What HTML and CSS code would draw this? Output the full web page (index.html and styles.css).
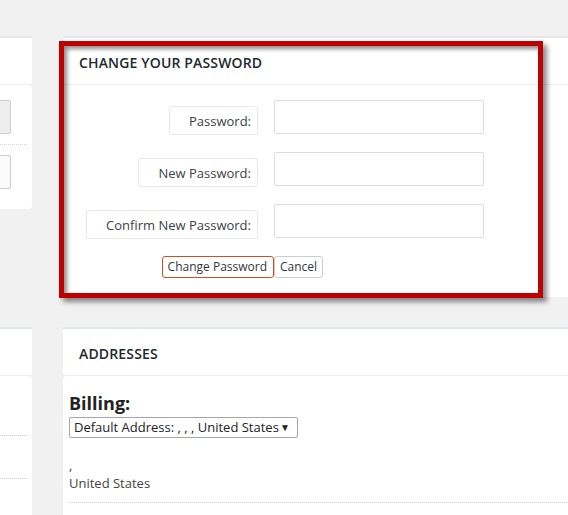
FILE: index.html
```html
<!DOCTYPE html>
<html>
<head>
<meta charset="utf-8">
<link rel="stylesheet" href="styles.css">
</head>
<body>
<div class="page">
  <div class="panel side-panel">
    <div class="panel-head"></div>
    <div class="panel-body side-body-top">
      <div class="side-row"><div class="side-box side-box-gray"></div></div>
      <div class="side-row side-row-last"><div class="side-box side-box-light"></div></div>
    </div>
  </div>

  <div class="panel pw-panel">
    <div class="panel-head"><h2 class="panel-title">CHANGE YOUR PASSWORD</h2></div>
    <div class="panel-body pw-body">
      <div class="pw-row">
        <div class="pw-label-cell"><span class="pw-label">Password:</span></div>
        <div class="pw-input"></div>
      </div>
      <div class="pw-row">
        <div class="pw-label-cell"><span class="pw-label">New Password:</span></div>
        <div class="pw-input"></div>
      </div>
      <div class="pw-row">
        <div class="pw-label-cell"><span class="pw-label">Confirm New Password:</span></div>
        <div class="pw-input"></div>
      </div>
      <div class="pw-actions">
        <div class="pw-action-cell"><button class="btn btn-primary">Change Password</button></div>
        <button class="btn btn-cancel">Cancel</button>
      </div>
    </div>
    <div class="highlight"></div>
  </div>

  <div class="panel side-panel">
    <div class="panel-head"></div>
    <div class="panel-body side-body-bottom">
      <div class="side-line side-line-first"></div>
      <div class="side-line"></div>
    </div>
  </div>

  <div class="panel addr-panel">
    <div class="panel-head"><h2 class="panel-title">ADDRESSES</h2></div>
    <div class="panel-body addr-body">
      <h3 class="addr-title">Billing:</h3>
      <div class="addr-select"><span>Default Address: , , , United States</span><span class="addr-arrow">▼</span></div>
      <div class="addr-text">
        <div>,</div>
        <div>United States</div>
      </div>
    </div>
  </div>
</div>
</body>
</html>
```

FILE: styles.css
```css
html, body {
  margin: 0;
  padding: 0;
  overflow: hidden;
}
body {
  background: #f1f1f1;
  font-family: "Open Sans", "Liberation Sans", sans-serif;
  color: #444;
  width: 568px;
  height: 515px;
}
.page {
  display: grid;
  grid-template-columns: 232px 540px;
  column-gap: 31px;
  row-gap: 30px;
  align-items: start;
  margin-left: -200px;
  padding-top: 36px;
}
.panel {
  border-top: 2px solid #e5e8eb;
  position: relative;
}
.panel-head {
  background: #fff;
  height: 47px;
  box-sizing: border-box;
  padding: 15px 16px 0;
  border-bottom: 1px solid #eeeeee;
}
.panel-title {
  margin: 0;
  font-size: 14px;
  line-height: 20px;
  font-weight: 600;
  letter-spacing: 0.15px;
  color: #23282d;
}
.panel-body {
  background: #fff;
  border-radius: 4px;
}

/* left side panels */
.side-body-top {
  padding: 15px 5px 20px 0;
}
.side-row {
  display: flex;
  justify-content: flex-end;
  padding: 0 16px 10px 0;
  border-bottom: 1px dotted #d0d0d0;
}
.side-row + .side-row {
  padding-top: 10px;
}
.side-row-last {
  border-bottom: none;
  padding-bottom: 0;
}
.side-box {
  width: 180px;
  height: 34px;
  box-sizing: border-box;
  border: 1px solid #cccccc;
  border-radius: 2px;
}
.side-box-gray {
  background: #eeeeee;
}
.side-box-light {
  background: #fbfbfb;
}
.side-body-bottom {
  padding: 0 5px 80px 0;
}
.side-line {
  height: 42px;
  border-bottom: 1px dotted #d0d0d0;
}
.side-line-first {
  height: 59px;
}

/* password panel */
.pw-body {
  padding: 15px 0 19px;
  display: flex;
  flex-direction: column;
  gap: 18px;
}
.pw-row {
  display: flex;
  align-items: flex-start;
  height: 34px;
}
.pw-label-cell {
  width: 195px;
  margin-right: 16px;
  display: flex;
  justify-content: flex-end;
  padding-top: 6px;
}
.pw-label {
  display: block;
  height: 29px;
  box-sizing: border-box;
  line-height: 28px;
  border: 1px solid #e8e8e8;
  border-radius: 3px;
  padding: 0 6px 0 19px;
  font-size: 13px;
  color: #3c4146;
}
.pw-input {
  width: 210px;
  height: 34px;
  box-sizing: border-box;
  border: 1px solid #dddddd;
  border-radius: 2px;
  background: #fff;
}
.pw-actions {
  display: flex;
}
.pw-action-cell {
  width: 211px;
  display: flex;
  justify-content: flex-end;
}
.btn {
  font-family: "Open Sans", "Liberation Sans", sans-serif;
  font-size: 12px;
  height: 22px;
  line-height: 20px;
  padding: 0 6px;
  margin: 0;
  background: #fff;
  color: #32373c;
  border-radius: 3px;
  box-sizing: border-box;
}
.btn-primary {
  border: 1px solid #d54e21;
  padding: 0 6px 0 5px;
}
.btn-cancel {
  border: 1px solid #cccccc;
  padding: 0 5px;
}
.highlight {
  position: absolute;
  left: -4px;
  top: 3px;
  width: 484px;
  height: 257px;
  box-sizing: border-box;
  border: 5px solid #c00000;
  box-shadow: inset 3px 3px 4px rgba(0, 0, 0, 0.45), 4px 4px 5px rgba(0, 0, 0, 0.45);
  pointer-events: none;
}

/* addresses panel */
.addr-body {
  padding: 15px 0 60px 6px;
}
.addr-title {
  margin: 0;
  font-size: 18px;
  line-height: 24px;
  font-weight: 700;
  color: #222;
}
.addr-select {
  margin-top: 2px;
  width: 229px;
  height: 21px;
  box-sizing: border-box;
  border: 1px solid #a6a6a6;
  border-radius: 2px;
  display: flex;
  align-items: center;
  justify-content: space-between;
  padding: 0 7px 0 4px;
  font-size: 13px;
  color: #222;
  line-height: 19px;
}
.addr-arrow {
  font-size: 10px;
  color: #222;
}
.addr-text {
  margin-top: 18px;
  font-size: 13px;
  line-height: 18px;
  color: #444;
  padding-bottom: 10px;
  border-bottom: 1px dotted #d0d0d0;
}
```
